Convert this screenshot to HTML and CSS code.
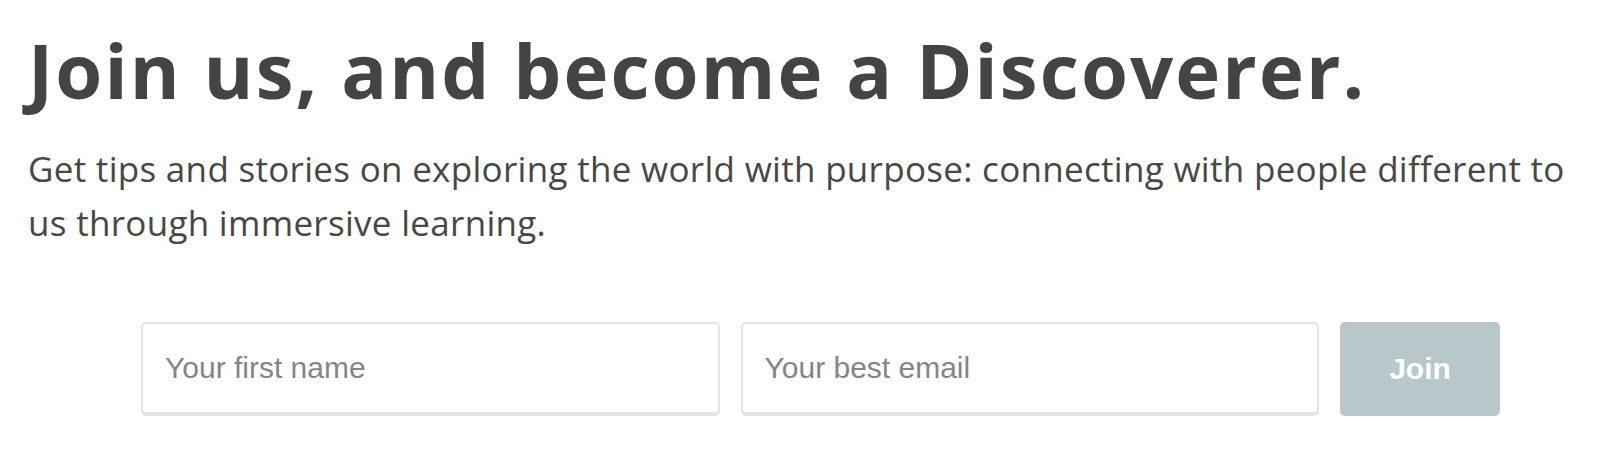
FILE: index.html
```html
<!DOCTYPE html>
<html>
<head>
<title>Join us</title>
<link rel="stylesheet" href="styles.css">
</head>
<body>
    <section class="signup">
        <h1>Join us, and become a Discoverer.</h1>
        <p class="intro">Get tips and stories on exploring the world with purpose: connecting with people different to us through immersive learning.</p>
        <form class="signup-form" onsubmit="return false">
            <input type="text" class="field" placeholder="Your first name">
            <input type="email" class="field" placeholder="Your best email">
            <button type="submit" class="join-btn">Join</button>
        </form>
    </section>
</body>
</html>
```

FILE: styles.css
```css
html {
    background: #fff;
}
body {
    margin: 0;
    padding: 0 28px;
}

h1 {
    margin: 23px 0 0;
    font-family: "Open Sans", "DejaVu Sans", sans-serif;
    font-weight: 700;
    font-size: 76px;
    line-height: 94px;
    letter-spacing: 2.1px;
    color: #444;
}

.intro {
    margin: 25px 0 0;
    font-family: "Open Sans", "Noto Sans", sans-serif;
    font-size: 35px;
    line-height: 54px;
    letter-spacing: 0.3px;
    color: #474747;
}

.signup-form {
    display: flex;
    gap: 21px;
    margin: 72px 72px 0 113px;
}

.field {
    flex: 1;
    min-width: 0;
    height: 94px;
    margin: 0;
    padding: 0 22px;
    box-sizing: border-box;
    border: 2px solid #e4e4e4;
    border-bottom-width: 4px;
    border-radius: 5px;
    background: #fff;
    font-family: "Liberation Sans", Arial, sans-serif;
    font-size: 30px;
    color: #333;
    outline: none;
}
.field::placeholder {
    color: #858585;
}

.join-btn {
    width: 160px;
    height: 94px;
    border: none;
    border-radius: 5px;
    background-color: #b7c7ca;
    color: #fff;
    font-family: "Liberation Sans", Arial, sans-serif;
    font-weight: 700;
    font-size: 30px;
    cursor: pointer;
}
```
